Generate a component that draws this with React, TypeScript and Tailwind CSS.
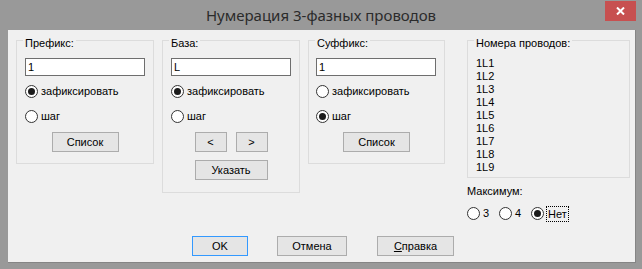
import clsx from 'clsx';

function Radio({ checked, label, focus }: { checked?: boolean; label: string; focus?: boolean }) {
  return (
    <div className="flex items-center h-[13px]">
      <span className="w-[13px] h-[13px] shrink-0 rounded-full border border-[#333333] bg-white flex items-center justify-center">
        {checked && <span className="w-[7px] h-[7px] rounded-full bg-[#1b1b1b]" />}
      </span>
      {focus ? (
        <span className="ml-[2px] border border-dotted border-black px-[1px] leading-[14px]">{label}</span>
      ) : (
        <span className="ml-[3px] leading-[13px]">{label}</span>
      )}
    </div>
  );
}

function Btn({ children, className, primary }: { children: React.ReactNode; className?: string; primary?: boolean }) {
  return (
    <button
      className={clsx(
        'h-[20px] border bg-[#e5e5e5] text-[11px] leading-none text-black flex items-center justify-center',
        primary ? 'border-[#3399ff]' : 'border-[#acacac]',
        className
      )}
    >
      {children}
    </button>
  );
}

function TextBox({ value, className }: { value: string; className?: string }) {
  return (
    <input
      readOnly
      value={value}
      className={clsx('h-[18px] w-[120px] border border-[#6e6e6e] bg-white px-[2px] text-[11px] text-black outline-none', className)}
    />
  );
}

function Group({ title, className, children }: { title: string; className?: string; children: React.ReactNode }) {
  return (
    <fieldset className={clsx('border border-[#dcdcdc] p-0 m-0 shrink-0', className)}>
      <legend className="ml-[6px] px-[2px] pt-[6px] leading-[12px]">{title}</legend>
      <div className="flex flex-col items-start">{children}</div>
    </fieldset>
  );
}

const wires = ['1L1', '1L2', '1L3', '1L4', '1L5', '1L6', '1L7', '1L8', '1L9'];

export default function App() {
  return (
    <div className="w-[642px] h-[269px] bg-[#999999] font-['Liberation_Sans',Arial,sans-serif] text-[11px] text-black flex flex-col overflow-hidden">
      <div className="h-[30px] shrink-0 grid grid-cols-[1fr_auto_1fr]">
        <div />
        <div className="pt-[5px] text-[15px] leading-[20px] text-[#2b2b2b] font-['Noto_Sans',sans-serif]">
          Нумерация 3-фазных проводов
        </div>
        <div className="flex justify-end items-start pr-[6px] pt-[1px]">
          <div className="w-[31px] h-[20px] bg-[#c75050] flex items-center justify-center">
            <svg width="9" height="8" viewBox="0 0 9 8">
              <path d="M1 0.5 L8 7.5 M8 0.5 L1 7.5" stroke="white" strokeWidth="2" />
            </svg>
          </div>
        </div>
      </div>

      <div className="ml-[8px] w-[628px] h-[233px] bg-[#f0f0f0] border-r border-b border-[#858585] pl-[8px] pt-[1px] flex flex-col">
        <div className="flex items-start gap-[8px]">
          <Group title="Префикс:" className="w-[138px] h-[133px]">
            <TextBox value="1" className="mt-[9px] ml-[8px]" />
            <div className="mt-[9px] ml-[8px]">
              <Radio checked label="зафиксировать" />
            </div>
            <div className="mt-[12px] ml-[8px]">
              <Radio label="шаг" />
            </div>
            <Btn className="mt-[9px] w-[67px] self-center">Список</Btn>
          </Group>

          <Group title="База:" className="w-[138px] h-[162px]">
            <TextBox value="L" className="mt-[9px] ml-[8px]" />
            <div className="mt-[9px] ml-[8px]">
              <Radio checked label="зафиксировать" />
            </div>
            <div className="mt-[12px] ml-[8px]">
              <Radio label="шаг" />
            </div>
            <div className="mt-[9px] self-center flex gap-[9px]">
              <Btn className="w-[32px]">&lt;</Btn>
              <Btn className="w-[32px]">&gt;</Btn>
            </div>
            <Btn className="mt-[8px] w-[73px] self-center">Указать</Btn>
          </Group>

          <Group title="Суффикс:" className="w-[137px] h-[133px]">
            <TextBox value="1" className="mt-[9px] ml-[7px]" />
            <div className="mt-[9px] ml-[7px]">
              <Radio label="зафиксировать" />
            </div>
            <div className="mt-[12px] ml-[7px]">
              <Radio checked label="шаг" />
            </div>
            <Btn className="mt-[9px] w-[67px] self-center">Список</Btn>
          </Group>

          <div className="ml-[14px] flex flex-col">
            <Group title="Номера проводов:" className="w-[163px] h-[147px]">
              <div className="mt-[8px] ml-[8px] leading-[13px]">
                {wires.map((w) => (
                  <div key={w}>{w}</div>
                ))}
              </div>
            </Group>
            <div className="mt-[6px] leading-[14px]">Максимум:</div>
            <div className="mt-[9px] flex">
              <div className="w-[32px]">
                <Radio label="3" />
              </div>
              <div className="w-[32px]">
                <Radio label="4" />
              </div>
              <div>
                <Radio checked focus label="Нет" />
              </div>
            </div>
          </div>
        </div>

        <div className="mt-[16px] ml-[176px] flex">
          <Btn primary className="w-[56px]">OK</Btn>
          <Btn className="ml-[29px] w-[70px]">Отмена</Btn>
          <Btn className="ml-[30px] w-[77px]">
            <span className="underline">С</span>правка
          </Btn>
        </div>
      </div>
    </div>
  );
}
